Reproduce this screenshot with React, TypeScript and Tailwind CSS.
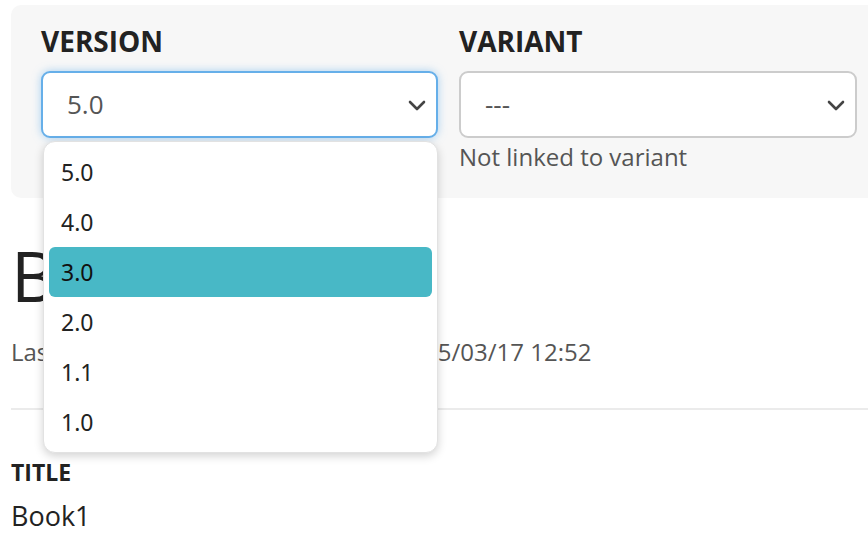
const versions = ["5.0", "4.0", "3.0", "2.0", "1.1", "1.0"];

function Chevron() {
  return (
    <svg className="w-[24px] h-[24px] text-[#444]" viewBox="0 0 24 24" fill="none" stroke="currentColor" strokeWidth={2.6} strokeLinecap="round" strokeLinejoin="round">
      <path d="M5 9l7 7 7-7" />
    </svg>
  );
}

export default function App() {
  return (
    <div className="w-[868px] h-[546px] overflow-hidden bg-white font-['Open_Sans',sans-serif] text-[#222]">
      <div className="pl-[11px] pt-[5px]">
        {/* Filter panel */}
        <div className="w-[900px] bg-[#f7f7f7] rounded-[10px] pl-[30px] pt-[18px] pb-[23px]">
          <div className="flex gap-[21px]">
            {/* Version column */}
            <div className="relative w-[397px]">
              <div className="text-[28px] font-bold leading-[36px] uppercase">Version</div>
              <div className="mt-[12px] h-[67px] rounded-[9px] border-2 border-[#66afe9] bg-white shadow-[0_0_8px_rgba(102,175,233,0.55)] flex items-center justify-between pl-[24px] pr-[7px]">
                <span className="text-[26px] text-[#555]">5.0</span>
                <Chevron />
              </div>

              {/* Open dropdown list */}
              <div className="absolute z-10 top-[118px] left-[2px] w-[395px] bg-white rounded-[12px] border border-[#e2e2e2] shadow-[0_3px_10px_rgba(0,0,0,0.18)] py-[5px] font-['Noto_Sans',sans-serif]">
                {versions.map((v) => (
                  <div
                    key={v}
                    className={
                      v === "3.0"
                        ? "mx-[5px] h-[50px] rounded-[6px] bg-[#48b8c6] flex items-center pl-[12px] text-[23px] text-[#111]"
                        : "mx-[5px] h-[50px] flex items-center pl-[12px] text-[23px] text-[#222]"
                    }
                  >
                    {v}
                  </div>
                ))}
              </div>
            </div>

            {/* Variant column */}
            <div className="w-[398px]">
              <div className="text-[28px] font-bold leading-[36px] uppercase">Variant</div>
              <div className="mt-[12px] h-[67px] rounded-[9px] border-2 border-[#cccccc] bg-white flex items-center justify-between pl-[24px] pr-[7px]">
                <span className="text-[26px] text-[#555]">---</span>
                <Chevron />
              </div>
              <div className="text-[24px] text-[#555] leading-[36px] mt-[1px]">Not linked to variant</div>
            </div>
          </div>
        </div>

        {/* Document heading */}
        <h1 className="mt-[35px] text-[70px] font-normal leading-[84px] tracking-tight">Book1</h1>
        <div className="mt-[19px] text-[24px] text-[#555] leading-[32px] whitespace-nowrap">
          Last modified by administrator on 2015/03/17 12:52
        </div>
        <div className="mt-[40px] border-t-2 border-[#ebebeb] w-[900px]" />
        <div className="mt-[47px] text-[23px] font-bold uppercase leading-[30px]">Title</div>
        <div className="mt-[12px] text-[27px] leading-[34px]">Book1</div>
      </div>
    </div>
  );
}
